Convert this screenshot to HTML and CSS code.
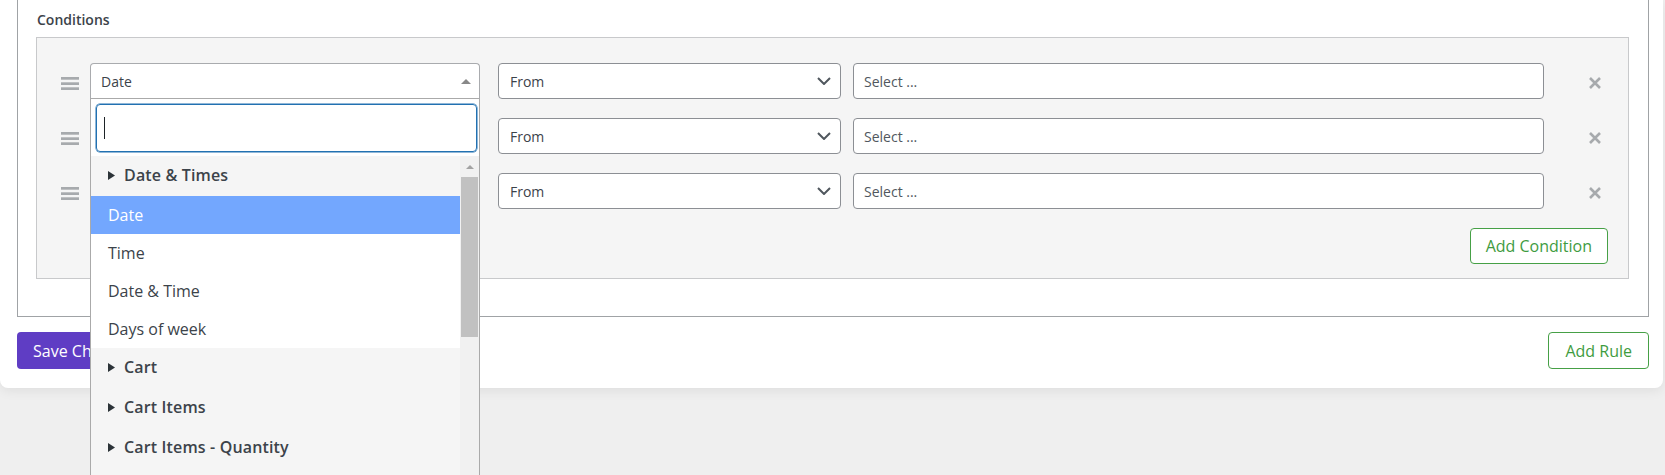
FILE: index.html
```html
<!DOCTYPE html>
<html lang="en">
<head>
<meta charset="utf-8">
<title>Rules</title>
<link rel="stylesheet" href="styles.css">
</head>
<body>
<div class="card">
  <div class="rule-box">
    <div class="label">Conditions</div>
    <div class="conditions">
      <div class="cond-row">
        <svg class="handle" width="18" height="13" viewBox="0 0 18 13"><rect x="0" y="0" width="18" height="2.7"/><rect x="0" y="5.3" width="18" height="2.7"/><rect x="0" y="10.3" width="18" height="2.7"/></svg>
        <div class="sel1 open">
          <div class="sel-head">
            <span>Date</span>
            <svg class="up" width="10" height="5" viewBox="0 0 10 5"><path d="M0 5 L5 0 L10 5 Z"/></svg>
          </div>
          <div class="dropdown">
            <div class="search-wrap"><div class="search"><span class="caret"></span></div></div>
            <div class="list-wrap">
              <div class="list">
                <div class="group"><svg class="tri" width="7" height="9" viewBox="0 0 7 9"><path d="M0 0 L7 4.5 L0 9 Z"/></svg>Date &amp; Times</div>
                <div class="opt hl">Date</div>
                <div class="opt">Time</div>
                <div class="opt">Date &amp; Time</div>
                <div class="opt">Days of week</div>
                <div class="group"><svg class="tri" width="7" height="9" viewBox="0 0 7 9"><path d="M0 0 L7 4.5 L0 9 Z"/></svg>Cart</div>
                <div class="group"><svg class="tri" width="7" height="9" viewBox="0 0 7 9"><path d="M0 0 L7 4.5 L0 9 Z"/></svg>Cart Items</div>
                <div class="group"><svg class="tri" width="7" height="9" viewBox="0 0 7 9"><path d="M0 0 L7 4.5 L0 9 Z"/></svg>Cart Items - Quantity</div>
                <div class="group"></div>
              </div>
              <div class="scrollbar">
                <svg class="sb-up" width="8" height="4" viewBox="0 0 8 4"><path d="M0 4 L4 0 L8 4 Z"/></svg>
                <div class="thumb"></div>
              </div>
            </div>
          </div>
        </div>
        <div class="sel2"><span>From</span><svg class="chev" width="14" height="8" viewBox="0 0 14 8"><path d="M1 1 L7 7 L13 1"/></svg></div>
        <div class="inp">Select ...</div>
        <svg class="x" width="12" height="12" viewBox="0 0 12 12"><path d="M1 1 L11 11 M11 1 L1 11"/></svg>
      </div>
      <div class="cond-row">
        <svg class="handle" width="18" height="13" viewBox="0 0 18 13"><rect x="0" y="0" width="18" height="2.7"/><rect x="0" y="5.3" width="18" height="2.7"/><rect x="0" y="10.3" width="18" height="2.7"/></svg>
        <div class="sel1"><div class="sel-head"><span>Date</span></div></div>
        <div class="sel2"><span>From</span><svg class="chev" width="14" height="8" viewBox="0 0 14 8"><path d="M1 1 L7 7 L13 1"/></svg></div>
        <div class="inp">Select ...</div>
        <svg class="x" width="12" height="12" viewBox="0 0 12 12"><path d="M1 1 L11 11 M11 1 L1 11"/></svg>
      </div>
      <div class="cond-row">
        <svg class="handle" width="18" height="13" viewBox="0 0 18 13"><rect x="0" y="0" width="18" height="2.7"/><rect x="0" y="5.3" width="18" height="2.7"/><rect x="0" y="10.3" width="18" height="2.7"/></svg>
        <div class="sel1"><div class="sel-head"><span>Date</span></div></div>
        <div class="sel2"><span>From</span><svg class="chev" width="14" height="8" viewBox="0 0 14 8"><path d="M1 1 L7 7 L13 1"/></svg></div>
        <div class="inp">Select ...</div>
        <svg class="x" width="12" height="12" viewBox="0 0 12 12"><path d="M1 1 L11 11 M11 1 L1 11"/></svg>
      </div>
      <div class="cond-footer"><button class="btn-outline add-cond">Add Condition</button></div>
    </div>
  </div>
  <div class="footer">
    <button class="btn-save">Save Changes</button>
    <button class="btn-outline add-rule">Add Rule</button>
  </div>
</div>
</body>
</html>
```
FILE: styles.css
```css
html, body {
  margin: 0;
  padding: 0;
  overflow: hidden;
  height: 475px;
}
body {
  background: #efefef;
  font-family: "Open Sans", "Noto Sans", sans-serif;
  color: #3c434a;
}
.card {
  background: #fff;
  margin-right: 2px;
  padding: 0 14px 19px 17px;
  border-radius: 0 0 8px 8px;
  box-shadow: 0 3px 12px rgba(0, 0, 0, 0.07);
}
.rule-box {
  border: 1px solid #a0a3a6;
  border-top: none;
  padding: 10px 19px 37px 18px;
}
.label {
  font-size: 14px;
  font-weight: 600;
  line-height: 20px;
  color: #3c434a;
  padding-left: 1px;
  margin-bottom: 7px;
}
.conditions {
  background: #f5f5f5;
  border: 1px solid #c8c9cb;
  padding: 25px 20px 14px 24px;
}
.cond-row {
  display: flex;
  align-items: flex-start;
  padding-right: 7px;
  margin-bottom: 19px;
}
.handle {
  fill: #a7aaad;
  margin-top: 14px;
  margin-right: 11px;
  flex: none;
}
.sel1 {
  width: 390px;
  flex: none;
  position: relative;
  margin-right: 18px;
}
.sel-head {
  height: 34px;
  border: 1px solid #8c8f94;
  border-radius: 4px;
  background: #fff;
  display: flex;
  align-items: center;
  justify-content: space-between;
  padding: 0 8px 0 10px;
  font-size: 14px;
  color: #3c434a;
}
.open .sel-head {
  border-radius: 4px 4px 0 0;
  border-color: #a9abae;
  border-bottom-color: #aaaaaa;
}
.up {
  fill: #888;
  margin-top: 1px;
}
.dropdown {
  position: absolute;
  top: 36px;
  left: 0;
  width: 390px;
  box-sizing: border-box;
  border: 1px solid #aaaaaa;
  border-top: none;
  background: #fff;
  z-index: 10;
}
.search-wrap {
  padding: 5px 2px 4px 5px;
}
.search {
  height: 46px;
  border: 1px solid #2271b1;
  border-radius: 4px;
  box-shadow: 0 0 0 0.5px #2271b1;
  display: flex;
  align-items: center;
  padding-left: 7px;
}
.caret {
  width: 1px;
  height: 22px;
  background: #1d2327;
}
.list-wrap {
  display: flex;
  height: 320px;
  overflow: hidden;
}
.list {
  flex: 1;
}
.group {
  height: 40px;
  box-sizing: border-box;
  padding-bottom: 2px;
  background: #f5f5f5;
  display: flex;
  align-items: center;
  padding-left: 17px;
  font-size: 16px;
  font-weight: 600;
  letter-spacing: 0.15px;
  color: #3c434a;
}
.tri {
  fill: #2c3338;
  margin-right: 9px;
}
.opt {
  height: 38px;
  display: flex;
  align-items: center;
  padding-left: 17px;
  font-size: 16px;
  color: #3c434a;
}
.opt.hl {
  background: #73a7fe;
  color: #fff;
}
.scrollbar {
  width: 19px;
  flex: none;
  background: #f1f1f1;
  display: flex;
  flex-direction: column;
  align-items: center;
}
.sb-up {
  fill: #a3a3a3;
  margin-top: 9px;
}
.thumb {
  width: 17px;
  height: 160px;
  margin-top: 8px;
  background: #c1c1c1;
}
.sel2 {
  width: 343px;
  flex: none;
  box-sizing: border-box;
  height: 36px;
  border: 1px solid #8c8f94;
  border-radius: 4px;
  background: #fff;
  display: flex;
  align-items: center;
  justify-content: space-between;
  padding: 0 9px 0 11px;
  font-size: 14px;
  color: #3c434a;
  margin-right: 12px;
}
.chev {
  fill: none;
  stroke: #50575e;
  stroke-width: 2;
}
.inp {
  flex: 1;
  height: 36px;
  box-sizing: border-box;
  border: 1px solid #8c8f94;
  border-radius: 4px;
  background: #fff;
  display: flex;
  align-items: center;
  padding-left: 10px;
  font-size: 14px;
  color: #50575e;
  margin-right: 45px;
}
.x {
  fill: none;
  stroke: #a7aaad;
  stroke-width: 2.6;
  margin-top: 14px;
  flex: none;
}
.cond-footer {
  display: flex;
  justify-content: flex-end;
}
.btn-outline {
  font-family: "Open Sans", "Noto Sans", sans-serif;
  font-size: 16px;
  background: #fff;
  border: 1px solid #46a046;
  color: #3f9c3f;
  border-radius: 4px;
  padding: 0 15px;
  margin: 0;
}
.add-cond {
  height: 36px;
}
.add-rule {
  height: 37px;
  padding: 0 16px;
}
.footer {
  display: flex;
  justify-content: space-between;
  margin-top: 15px;
}
.btn-save {
  font-family: "Open Sans", "Noto Sans", sans-serif;
  font-size: 16px;
  height: 37px;
  background: #5f3dc4;
  color: #fff;
  border: none;
  border-radius: 4px;
  padding: 0 16px;
  margin: 0;
}
```
